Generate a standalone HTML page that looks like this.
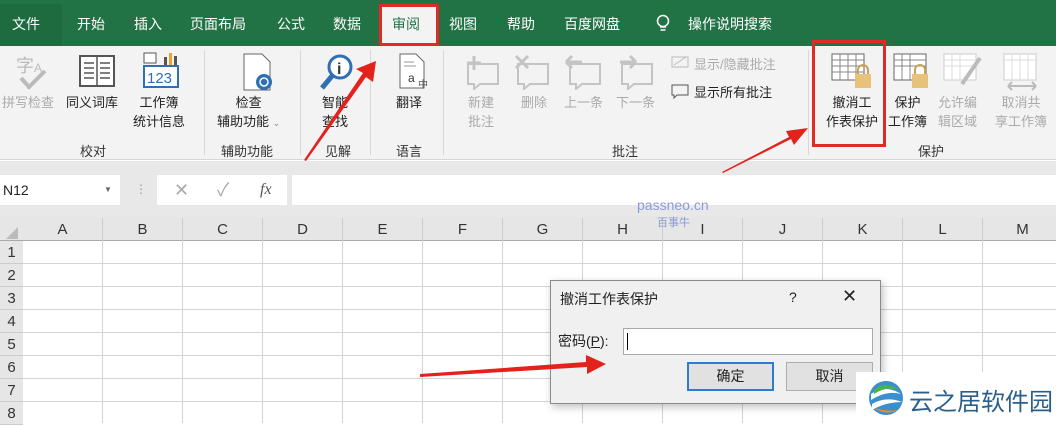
<!DOCTYPE html>
<html><head><meta charset="utf-8"><style>
*{margin:0;padding:0;box-sizing:border-box}
body{width:1056px;height:423px;overflow:hidden;position:relative;background:#fff;font-family:"Liberation Sans","Noto Sans CJK SC",sans-serif;font-size:13px;color:#222}
.a{position:absolute}
.tab{position:absolute;top:14px;color:#fff;font-size:14px}
.gl{position:absolute;top:141px;font-size:13px;color:#333}
.bt{position:absolute;font-size:13px;text-align:center;line-height:19px;color:#222}
.dis{color:#aaa}
.sep{position:absolute;top:50px;width:1px;height:105px;background:#d8d8d8}
.ch{position:absolute;top:218px;height:23px;width:80px;text-align:center;font-size:15px;line-height:23px;color:#333;border-right:1px solid #ccc}
.rh{position:absolute;left:0;width:23px;height:23px;font-size:15px;line-height:24px;color:#333;text-align:center;background:#e6e6e6;border-bottom:1px solid #ccc}
</style></head><body>
<div class="a" style="left:0;top:0;width:1056px;height:46px;background:#217346"></div>
<div class="a" style="left:0;top:4px;width:62px;height:42px;background:#1e6b40"></div>
<span class="tab" style="left:12px">文件</span>
<span class="tab" style="left:77px">开始</span>
<span class="tab" style="left:134px">插入</span>
<span class="tab" style="left:190px">页面布局</span>
<span class="tab" style="left:277px">公式</span>
<span class="tab" style="left:333px">数据</span>
<div class="a" style="left:379px;top:4px;width:60px;height:42px;background:#f3f3f3;border:3px solid #e02a24;border-radius:2px"></div>
<span class="tab" style="left:392px;color:#217346">审阅</span>
<span class="tab" style="left:449px">视图</span>
<span class="tab" style="left:507px">帮助</span>
<span class="tab" style="left:564px">百度网盘</span>
<svg class="a" style="left:655px;top:14px" width="16" height="20"><circle cx="8" cy="7" r="5.5" fill="none" stroke="#fff" stroke-width="1.5"/><path d="M5 13h6M5.5 16h5" stroke="#fff" stroke-width="1.5"/></svg>
<span class="tab" style="left:688px">操作说明搜索</span>

<div class="a" style="left:0;top:46px;width:1056px;height:114px;background:#f3f3f3;border-bottom:1px solid #d6d6d6"></div>
<!-- icons -->
<div class="a" style="left:16px;top:52px;font-size:18px;color:#bbb">字<span style="font-size:12px">A</span></div>
<svg class="a" style="left:18px;top:70px" width="30" height="20"><path d="M3 8l8 9 16-16" fill="none" stroke="#bbb" stroke-width="4"/></svg>
<svg class="a" style="left:78px;top:54px" width="38" height="34"><rect x="2" y="2" width="34" height="30" fill="#fff" stroke="#555" stroke-width="2"/><path d="M19 2v30M6 9h10M6 14h10M6 19h10M6 24h10M22 9h10M22 14h10M22 19h10M22 24h10" stroke="#555" stroke-width="1.5"/></svg>
<svg class="a" style="left:142px;top:52px" width="38" height="36"><rect x="2" y="1" width="12" height="10" fill="#fff" stroke="#555"/><rect x="22" y="5" width="3" height="8" fill="#555"/><rect x="27" y="1" width="3" height="12" fill="#f0a030"/><rect x="32" y="4" width="3" height="9" fill="#555"/><rect x="2" y="14" width="34" height="21" fill="#fff" stroke="#2f6fb3" stroke-width="2"/><text x="5" y="31" font-size="15" fill="#2f6fb3" font-family="Liberation Sans">123</text></svg>
<svg class="a" style="left:240px;top:52px" width="36" height="40"><path d="M4 2h18l8 8v28H4z" fill="#fff" stroke="#666"/><circle cx="24" cy="30" r="8" fill="#2f6fb3"/><circle cx="24" cy="30" r="4" fill="none" stroke="#fff" stroke-width="1.5"/></svg>
<svg class="a" style="left:318px;top:52px" width="40" height="40"><circle cx="22" cy="15" r="11" fill="#fff" stroke="#2f6fb3" stroke-width="3"/><text x="19" y="22" font-size="16" font-weight="bold" fill="#333" font-family="Liberation Sans">i</text><path d="M14 24L4 36" stroke="#2f6fb3" stroke-width="5"/></svg>
<svg class="a" style="left:398px;top:52px" width="34" height="40"><path d="M2 2h16l8 8v26H2z" fill="#fff" stroke="#666"/><path d="M6 10h10M6 14h12" stroke="#999"/><text x="10" y="30" font-size="12" fill="#333" font-family="Liberation Sans">a</text><text x="20" y="36" font-size="10" fill="#555">中</text></svg>
<svg class="a" style="left:462px;top:54px" width="200" height="36" fill="none" stroke="#c4c4c4" stroke-width="2"><path d="M6 10h30v20H18l-6 5v-5H6z"/><path d="M12 2v14M5 9h14" stroke-width="3"/><path d="M56 10h30v20H68l-6 5v-5H56z"/><path d="M54 2l12 12M66 2L54 14" stroke-width="3"/><path d="M108 10h30v20h-18l-6 5v-5h-6z"/><path d="M104 8h16M104 8l6-6M104 8l6 6" stroke-width="3"/><path d="M160 10h30v20h-18l-6 5v-5h-6z"/><path d="M158 8h16M174 8l-6-6M174 8l-6 6" stroke-width="3"/></svg>
<svg class="a" style="left:670px;top:55px" width="20" height="16" fill="none" stroke="#bbb"><rect x="2" y="2" width="16" height="10"/><path d="M4 10l12-8"/></svg>
<span class="a dis" style="left:694px;top:54px">显示/隐藏批注</span>
<svg class="a" style="left:670px;top:83px" width="20" height="16" fill="none" stroke="#555"><path d="M2 2h16v10H7l-3 3v-3H2z"/></svg>
<span class="a" style="left:694px;top:82px">显示所有批注</span>
<svg class="a" style="left:830px;top:52px" width="44" height="40"><rect x="2" y="2" width="32" height="26" fill="#fff" stroke="#666"/><path d="M2 8h32M2 14h32M2 20h32M10 2v26M18 2v26M26 2v26" stroke="#888"/><rect x="25" y="22" width="16" height="14" fill="#e6c27a"/><path d="M28 22v-4a5 5 0 0 1 10 0v4" fill="none" stroke="#c9a253" stroke-width="2"/></svg>
<svg class="a" style="left:892px;top:52px" width="44" height="40"><rect x="2" y="2" width="32" height="26" fill="#fff" stroke="#666"/><path d="M2 8h32M2 14h32M10 2v26M18 2v26" stroke="#888"/><rect x="20" y="22" width="16" height="14" fill="#e6c27a"/><path d="M23 22v-4a5 5 0 0 1 10 0v4" fill="none" stroke="#c9a253" stroke-width="2"/></svg>
<svg class="a" style="left:942px;top:52px" width="44" height="40"><rect x="2" y="2" width="32" height="26" fill="#fff" stroke="#ccc"/><path d="M2 8h32M2 14h32M10 2v26M18 2v26" stroke="#ddd"/><path d="M38 6L20 32" stroke="#bbb" stroke-width="4"/></svg>
<svg class="a" style="left:1000px;top:52px" width="44" height="40"><rect x="4" y="2" width="32" height="26" fill="#fff" stroke="#ccc"/><path d="M4 8h32M12 2v26M20 2v26M28 2v26" stroke="#ddd"/><path d="M8 34h28M8 34l4-4M8 34l4 4M36 34l-4-4M36 34l-4 4" stroke="#bbb" stroke-width="2" fill="none"/></svg>
<!-- labels -->
<div class="bt dis" style="left:2px;top:93px">拼写检查</div>
<div class="bt" style="left:66px;top:93px">同义词库</div>
<div class="bt" style="left:133px;top:93px">工作簿<br>统计信息</div>
<div class="bt" style="left:217px;top:93px">检查<br>辅助功能 <span style="color:#888;font-size:9px">⌄</span></div>
<div class="bt" style="left:322px;top:93px">智能<br>查找</div>
<div class="bt" style="left:396px;top:93px">翻译</div>
<div class="bt dis" style="left:468px;top:93px">新建<br>批注</div>
<div class="bt dis" style="left:521px;top:93px">删除</div>
<div class="bt dis" style="left:564px;top:93px">上一条</div>
<div class="bt dis" style="left:616px;top:93px">下一条</div>
<div class="bt" style="left:826px;top:93px">撤消工<br>作表保护</div>
<div class="bt" style="left:888px;top:93px">保护<br>工作簿</div>
<div class="bt dis" style="left:938px;top:93px">允许编<br>辑区域</div>
<div class="bt dis" style="left:995px;top:93px">取消共<br>享工作簿</div>
<div class="a" style="left:812px;top:40px;width:74px;height:107px;border:3px solid #e02a24"></div>
<span class="gl" style="left:80px">校对</span>
<span class="gl" style="left:221px">辅助功能</span>
<span class="gl" style="left:325px">见解</span>
<span class="gl" style="left:396px">语言</span>
<span class="gl" style="left:612px">批注</span>
<span class="gl" style="left:918px">保护</span>
<div class="sep" style="left:204px"></div><div class="sep" style="left:300px"></div><div class="sep" style="left:370px"></div><div class="sep" style="left:443px"></div><div class="sep" style="left:808px"></div>

<!-- formula bar -->
<div class="a" style="left:0;top:161px;width:1056px;height:56px;background:#e8e8e8"></div>
<div class="a" style="left:0;top:175px;width:120px;height:30px;background:#fff;font-size:14px;line-height:30px;padding-left:3px">N12<span style="position:absolute;left:104px;font-size:8px;color:#666">▼</span></div>
<div class="a" style="left:135px;top:182px;color:#999;font-size:12px">⋮</div>
<div class="a" style="left:157px;top:175px;width:130px;height:30px;background:#fff;color:#aaa;font-size:18px;line-height:30px"><span style="position:absolute;left:17px">✕</span><span style="position:absolute;left:60px">✓</span><span style="position:absolute;left:103px;color:#555;font-family:'Liberation Serif';font-style:italic;font-size:16px">fx</span></div>
<div class="a" style="left:292px;top:175px;width:764px;height:30px;background:#fff"></div>
<!-- grid -->
<div class="a" style="left:0;top:217px;width:1056px;height:24px;background:#e6e6e6;border-bottom:1px solid #aaa"></div>
<div class="a" style="left:0;top:241px;width:1056px;height:182px;background:repeating-linear-gradient(to bottom,#fff 0 22px,#d4d4d4 22px 23px)"></div>
<div class="a" style="left:23px;top:241px;width:1033px;height:182px;background:repeating-linear-gradient(to right,transparent 0 79px,#d4d4d4 79px 80px)"></div>
<svg class="a" style="left:4px;top:226px" width="16" height="14"><path d="M14 1v12H2z" fill="#bbb"/></svg>
<div class="ch" style="left:23px">A</div><div class="ch" style="left:103px">B</div><div class="ch" style="left:183px">C</div><div class="ch" style="left:263px">D</div><div class="ch" style="left:343px">E</div><div class="ch" style="left:423px">F</div><div class="ch" style="left:503px">G</div><div class="ch" style="left:583px">H</div><div class="ch" style="left:663px">I</div><div class="ch" style="left:743px">J</div><div class="ch" style="left:823px">K</div><div class="ch" style="left:903px">L</div><div class="ch" style="left:983px">M</div>
<div class="rh" style="top:241px">1</div><div class="rh" style="top:264px">2</div><div class="rh" style="top:287px">3</div><div class="rh" style="top:310px">4</div><div class="rh" style="top:333px">5</div><div class="rh" style="top:356px">6</div><div class="rh" style="top:379px">7</div><div class="rh" style="top:402px">8</div>
<div class="a" style="left:637px;top:197px;color:#8a9ad8;font-size:14px">passneo.cn</div>
<div class="a" style="left:657px;top:214px;color:#8a9ad8;font-size:11px">百事牛</div>

<!-- dialog -->
<div class="a" style="left:550px;top:280px;width:331px;height:124px;background:#f0f0f0;border:1px solid #8a8a8a;box-shadow:2px 3px 8px rgba(0,0,0,.25)"></div>
<div class="a" style="left:560px;top:289px;font-size:14px">撤消工作表保护</div>
<div class="a" style="left:789px;top:289px;font-size:14px">?</div>
<div class="a" style="left:842px;top:286px;font-size:18px">✕</div>
<div class="a" style="left:558px;top:331px;font-size:14px">密码(<u>P</u>):</div>
<div class="a" style="left:623px;top:328px;width:250px;height:27px;background:#fff;border:1px solid #aaa"></div>
<div class="a" style="left:627px;top:333px;width:1px;height:17px;background:#000"></div>
<div class="a" style="left:687px;top:362px;width:87px;height:29px;background:#e1e1e1;border:2px solid #2f7bd0;text-align:center;line-height:25px;font-size:14px">确定</div>
<div class="a" style="left:786px;top:362px;width:87px;height:29px;background:#e1e1e1;border:1px solid #adadad;text-align:center;line-height:27px;font-size:14px">取消</div>

<!-- arrows -->
<svg class="a" style="left:0;top:0" width="1056" height="423"><g fill="#e3221c"><path d="M304 160L363 73l-7-4 20-8-3 21-7-5-60 84z"/><path d="M722 172L789 137l-3-6 22-3-14 17-3-6-68 34z"/><path d="M420 374l166-12v-7l20 9-19 10v-7L420 377z"/></g></svg>

<!-- logo -->
<div class="a" style="left:856px;top:372px;width:200px;height:51px;background:#fff"></div>
<svg class="a" style="left:866px;top:376px" width="40" height="44"><circle cx="20" cy="22" r="17" fill="#3a8fd0"/><path d="M5 18q15-10 30 0q-15-4-30 6z" fill="#fff"/><path d="M6 28q14-8 30-2q-16 0-30 8z" fill="#fff"/><path d="M8 32q12 8 24 2q-10 2-24-2z" fill="#f08a2c"/><path d="M8 14q10-10 26 0q-14-4-26 4z" fill="#49b24a"/></svg>
<div class="a" style="left:909px;top:382px;font-size:24px;color:#2a5f8a">云之居软件园</div>
</body></html>
